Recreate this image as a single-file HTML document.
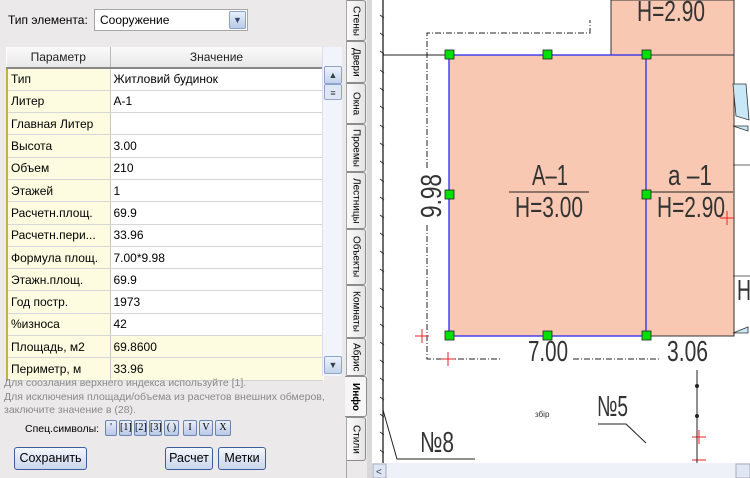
<!DOCTYPE html>
<html><head><meta charset="utf-8"><style>
*{margin:0;padding:0;box-sizing:border-box}
body{width:750px;height:478px;overflow:hidden;background:#fff;font-family:"Liberation Sans","DejaVu Sans",sans-serif;font-size:12px;color:#000;position:relative}
#left{position:absolute;left:0;top:0;width:347px;height:478px;background:#ebe9ea;border-right:1px solid #a8a6a6}
.lbl{position:absolute;left:8px;top:13px;font-size:12px}
.combo{position:absolute;left:94px;top:9px;width:154px;height:22px;background:#fff;border:1px solid #a6a6a6;padding:3px 5px;font-size:12px}
.combo .btn{position:absolute;right:1px;top:1px;width:17px;height:18px;background:linear-gradient(#e6eefa,#b9cbe8);border:1px solid #8aa0c6;border-radius:2px;color:#34496e;font-size:9px;text-align:center;line-height:16px}
table{position:absolute;left:6px;top:47px;border-collapse:collapse;width:316px;table-layout:fixed;background:#fff}
th{height:21px;font-weight:normal;background:linear-gradient(#fafafa,#e8e8e8);border-right:1px solid #b8b8b8;border-bottom:2px solid #888;font-size:12px;color:#222}
td{height:22.3px;border-bottom:1px solid #d6d6d6;padding-left:3px;font-size:12px;white-space:nowrap;overflow:hidden;background:#fff}
td:first-child{background:#fefce0;border-right:1px solid #c8c8c8;border-left:2px solid #c8b040}
tr.y td{background:#fefce0}
.sb{position:absolute;left:322px;top:47px;width:20px;height:329px;background:#f1f4fa;border-left:1px solid #dde}
.sb .a{position:absolute;left:1px;width:18px;height:18px;background:linear-gradient(#eef3fb,#c3d3ec);border:1px solid #8ea4c8;border-radius:2px;font-size:9px;color:#344;text-align:center;line-height:16px}
.info{position:absolute;left:4px;top:377px;color:#8a8a8a;font-size:10.5px;line-height:13.5px}
.spec{position:absolute;left:25px;top:423px;font-size:10.5px}
.sbtn{position:absolute;top:420px;height:16px;background:linear-gradient(#e9eef8,#b8c8e6);border:1px solid #6d84b0;border-radius:2px;font-size:10px;text-align:center;line-height:14px;font-family:"Liberation Serif",serif}
.bt{position:absolute;top:447px;height:23px;background:linear-gradient(#f3f6fc,#c9d6ec);border:1px solid #3c5d99;border-radius:3px;font-size:12.5px;text-align:center;line-height:20px}
#tabs{position:absolute;left:347px;top:0;width:20px;height:478px;background:#ebe9ea}
.tab{position:absolute;left:0;width:19px;background:linear-gradient(90deg,#fbfbfb,#e4e4e4);border:1px solid #8c8c8c;border-left:none;border-radius:0 3px 3px 0;font-size:10px;writing-mode:vertical-rl;text-align:center;display:flex;align-items:center;justify-content:center}
#split{position:absolute;left:367px;top:0;width:5px;height:478px;background:#d9d7d7}
svg{position:absolute;left:372px;top:0}
</style></head><body>
<div id="left">
<div class="lbl">Тип элемента:</div>
<div class="combo">Сооружение<div class="btn">&#9660;</div></div>
<table>
<colgroup><col style="width:103px"><col style="width:213px"></colgroup>
<tr><th>Параметр</th><th>Значение</th></tr>
<tr><td>Тип</td><td>Житловий будинок</td></tr>
<tr><td>Литер</td><td>А-1</td></tr>
<tr><td>Главная Литер</td><td></td></tr>
<tr><td>Высота</td><td>3.00</td></tr>
<tr><td>Объем</td><td>210</td></tr>
<tr><td>Этажей</td><td>1</td></tr>
<tr><td>Расчетн.площ.</td><td>69.9</td></tr>
<tr><td>Расчетн.пери...</td><td>33.96</td></tr>
<tr><td>Формула площ.</td><td>7.00*9.98</td></tr>
<tr><td>Этажн.площ.</td><td>69.9</td></tr>
<tr><td>Год постр.</td><td>1973</td></tr>
<tr><td>%износа</td><td>42</td></tr>
<tr class="y"><td>Площадь, м2</td><td>69.8600</td></tr>
<tr class="y"><td>Периметр, м</td><td>33.96</td></tr>
</table>
<div class="sb"><div class="a" style="top:19px">&#9650;</div><div class="a" style="top:37px;height:16px;background:#dfe7f5">≡</div><div class="a" style="top:309px">&#9660;</div></div>
<div class="info">Для соозлания верхнего индекса используйте [1].<br>Для исключения площади/объема из расчетов внешних обмеров,<br>заключите значение в (28).</div>
<div class="spec">Спец.символы:</div>
<div class="sbtn" style="left:105px;width:12px">'</div>
<div class="sbtn" style="left:119px;width:13px">[1]</div>
<div class="sbtn" style="left:134px;width:13px">[2]</div>
<div class="sbtn" style="left:149px;width:13px">[3]</div>
<div class="sbtn" style="left:164px;width:15px">( )</div>
<div class="sbtn" style="left:183px;width:14px">I</div>
<div class="sbtn" style="left:199px;width:14px">V</div>
<div class="sbtn" style="left:215px;width:16px">X</div>
<div class="bt" style="left:14px;width:73px">Сохранить</div>
<div class="bt" style="left:165px;width:48px">Расчет</div>
<div class="bt" style="left:218px;width:48px">Метки</div>
</div>
<div id="tabs">
<div class="tab" style="top:0;height:41px">Стены</div>
<div class="tab" style="top:41px;height:42px">Двери</div>
<div class="tab" style="top:83px;height:41px">Окна</div>
<div class="tab" style="top:124px;height:48px">Проемы</div>
<div class="tab" style="top:172px;height:57px">Лестницы</div>
<div class="tab" style="top:229px;height:56px">Объекты</div>
<div class="tab" style="top:285px;height:53px">Комнаты</div>
<div class="tab" style="top:338px;height:38px">Абрис</div>
<div class="tab" style="top:376px;height:41px;left:-2px;width:22px;background:#f6f6f6;font-weight:bold">Инфо</div>
<div class="tab" style="top:417px;height:44px">Стили</div>
</div>
<div id="split"></div>
<svg width="378" height="478" viewBox="372 0 378 478" font-family="Liberation Sans, sans-serif">
<rect x="372" y="0" width="378" height="478" fill="#fff"/>
<rect x="611" y="0" width="123" height="55" fill="#f8c8b2" stroke="#333" stroke-width="1"/>
<rect x="646" y="55" width="88" height="281" fill="#f8c8b2" stroke="#333" stroke-width="1"/>
<rect x="449" y="55" width="197" height="281" fill="#f8c8b2" stroke="#2a2aee" stroke-width="1.3"/>
<line x1="383" y1="0" x2="383" y2="463" stroke="#222" stroke-width="1.3"/>
<line x1="383" y1="55" x2="449" y2="55" stroke="#222"/>
<polyline points="427,168 427,33 590,33 590,20" fill="none" stroke="#222" stroke-dasharray="6,2,1,2"/>
<polyline points="427,225 427,359 500,359" fill="none" stroke="#222" stroke-dasharray="6,2,1,2"/>
<line x1="573" y1="359" x2="660" y2="359" stroke="#222" stroke-dasharray="6,2,1,2"/>
<g stroke="#222" stroke-width="0.8">
<path d="M380 15l4 3M380 33l4 3M380 51l4 3M380 70l4 3M380 88l4 3M380 106l4 3M380 125l4 3M380 143l4 3M380 161l4 3M380 179l4 3M380 197l4 3M380 215l4 3M380 233l4 3M380 251l4 3M380 269l4 3M380 288l4 3M380 306l4 3M380 324l4 3M380 342l4 3M380 360l4 3M380 378l4 3M380 397l4 3M380 414l4 3M380 432l4 3M380 450l4 3"/>
</g>
<polyline points="383,410 397,459 475,459" fill="none" stroke="#222"/>
<g fill="#00e000" stroke="#222" stroke-width="0.8">
<rect x="445" y="50" width="9" height="9"/><rect x="543" y="50" width="9" height="9"/><rect x="642" y="50" width="9" height="9"/>
<rect x="445" y="190" width="9" height="9"/><rect x="642" y="190" width="9" height="9"/>
<rect x="445" y="331" width="9" height="9"/><rect x="543" y="331" width="9" height="9"/><rect x="642" y="331" width="9" height="9"/>
</g>
<line x1="509" y1="192" x2="589" y2="192" stroke="#222"/>
<line x1="651" y1="192" x2="733" y2="192" stroke="#222"/>
<g fill="#333" font-size="29">
<text x="532" y="185" textLength="36" lengthAdjust="spacingAndGlyphs">А–1</text>
<text x="515" y="217" textLength="68" lengthAdjust="spacingAndGlyphs">Н=3.00</text>
<text x="668" y="185" textLength="44" lengthAdjust="spacingAndGlyphs">а –1</text>
<text x="657" y="217" textLength="68" lengthAdjust="spacingAndGlyphs">Н=2.90</text>
<text x="637" y="21" textLength="68" lengthAdjust="spacingAndGlyphs">Н=2.90</text>
<text x="528" y="361" textLength="40" lengthAdjust="spacingAndGlyphs">7.00</text>
<text x="667" y="361" textLength="41" lengthAdjust="spacingAndGlyphs">3.06</text>
<text x="597" y="416" textLength="31" lengthAdjust="spacingAndGlyphs">№5</text>
<text x="420" y="452" textLength="34" lengthAdjust="spacingAndGlyphs">№8</text>
<text x="0" y="0" transform="translate(441,218) rotate(-90)" textLength="44" lengthAdjust="spacingAndGlyphs">9.98</text>
<text x="737" y="300" textLength="14" lengthAdjust="spacingAndGlyphs">Н</text>
<text x="535" y="417" font-size="8">збір</text>
</g>
<g stroke="#e22" stroke-width="1">
<path d="M415 336h14M422 329v14M441 359h14M448 352v14M720 218h14M727 211v14M692 437h14M699 430v14M692 460h14"/>
</g>
<polyline points="598,424 626,424 646,443" fill="none" stroke="#222"/>
<line x1="697" y1="370" x2="697" y2="463" stroke="#222"/>
<circle cx="697" cy="386" r="2" fill="#222"/><circle cx="697" cy="416" r="2" fill="#222"/>
<path d="M733 84l13 0 3 36-13-4zM733 126l15 5 0-5zM733 165h17M733 276h17M733 333l15-6 0 6z" fill="#c8e8f8" stroke="#333" stroke-width="0.8"/>
<rect x="372" y="463" width="378" height="15" fill="#eef2f8"/>
<rect x="373" y="464" width="13" height="14" fill="#dfe7f3" stroke="#aab"/>
<text x="376" y="475" font-size="10" fill="#345">&lt;</text>
<rect x="736" y="464" width="14" height="14" fill="#dfe7f3" stroke="#aab"/>
</svg>
</body></html>
